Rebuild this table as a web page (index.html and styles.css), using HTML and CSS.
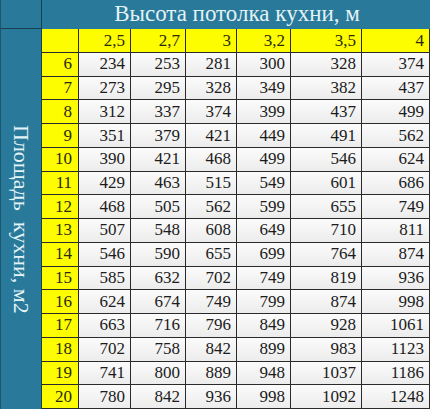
FILE: index.html
```html
<!DOCTYPE html>
<html>
<head>
<meta charset="utf-8">
<link rel="stylesheet" href="styles.css">
</head>
<body>
<div class="sheet">
  <div class="corner"></div>
  <div class="title">Высота потолка кухни, м</div>
  <div class="side"><span class="side-text">Площадь&nbsp; кухни, м2</span></div>

  <div class="hd"></div><div class="hd">2,5</div><div class="hd">2,7</div><div class="hd">3</div><div class="hd">3,2</div><div class="hd">3,5</div><div class="hd">4</div>

  <div class="rh">6</div><div class="c">234</div><div class="c">253</div><div class="c">281</div><div class="c">300</div><div class="c">328</div><div class="c">374</div>
  <div class="rh">7</div><div class="c">273</div><div class="c">295</div><div class="c">328</div><div class="c">349</div><div class="c">382</div><div class="c">437</div>
  <div class="rh">8</div><div class="c">312</div><div class="c">337</div><div class="c">374</div><div class="c">399</div><div class="c">437</div><div class="c">499</div>
  <div class="rh">9</div><div class="c">351</div><div class="c">379</div><div class="c">421</div><div class="c">449</div><div class="c">491</div><div class="c">562</div>
  <div class="rh">10</div><div class="c">390</div><div class="c">421</div><div class="c">468</div><div class="c">499</div><div class="c">546</div><div class="c">624</div>
  <div class="rh">11</div><div class="c">429</div><div class="c">463</div><div class="c">515</div><div class="c">549</div><div class="c">601</div><div class="c">686</div>
  <div class="rh">12</div><div class="c">468</div><div class="c">505</div><div class="c">562</div><div class="c">599</div><div class="c">655</div><div class="c">749</div>
  <div class="rh">13</div><div class="c">507</div><div class="c">548</div><div class="c">608</div><div class="c">649</div><div class="c">710</div><div class="c">811</div>
  <div class="rh">14</div><div class="c">546</div><div class="c">590</div><div class="c">655</div><div class="c">699</div><div class="c">764</div><div class="c">874</div>
  <div class="rh">15</div><div class="c">585</div><div class="c">632</div><div class="c">702</div><div class="c">749</div><div class="c">819</div><div class="c">936</div>
  <div class="rh">16</div><div class="c">624</div><div class="c">674</div><div class="c">749</div><div class="c">799</div><div class="c">874</div><div class="c">998</div>
  <div class="rh">17</div><div class="c">663</div><div class="c">716</div><div class="c">796</div><div class="c">849</div><div class="c">928</div><div class="c">1061</div>
  <div class="rh">18</div><div class="c">702</div><div class="c">758</div><div class="c">842</div><div class="c">899</div><div class="c">983</div><div class="c">1123</div>
  <div class="rh">19</div><div class="c">741</div><div class="c">800</div><div class="c">889</div><div class="c">948</div><div class="c">1037</div><div class="c">1186</div>
  <div class="rh">20</div><div class="c">780</div><div class="c">842</div><div class="c">936</div><div class="c">998</div><div class="c">1092</div><div class="c">1248</div>
</div>
</body>
</html>
```

FILE: styles.css
```css
body {
  margin: 0;
  padding: 0;
  background: #ffffff;
  font-family: "Liberation Serif", "Times New Roman", serif;
}

.sheet {
  width: 430px;
  height: 409px;
  display: grid;
  grid-template-columns: 42px 37px 52px 55px 51px 54px 71px 68px;
  grid-template-rows: 29px 24px repeat(15, 1fr);
  font-family: "Liberation Serif", "Times New Roman", serif;
  color: #1c1c1c;
}

.corner {
  grid-column: 1;
  grid-row: 1;
  box-sizing: border-box;
  background: #29799a;
  border-left: 1px solid #1b5870;
  border-right: 1px solid #173f50;
  border-bottom: 1px solid #173f50;
}

.title {
  grid-column: 2 / span 7;
  grid-row: 1;
  box-sizing: border-box;
  background: #29799a;
  color: #e3f3f6;
  font-family: "Liberation Serif", "Times New Roman", serif;
  font-size: 23px;
  text-align: center;
  line-height: 28px;
  padding-left: 2px;
  white-space: nowrap;
}

.side {
  grid-column: 1;
  grid-row: 2 / span 16;
  box-sizing: border-box;
  background: #29799a;
  border-left: 1px solid #1b5870;
  border-right: 1px solid #173f50;
  display: flex;
  align-items: center;
  justify-content: center;
}

.side-text {
  writing-mode: vertical-rl;
  color: #e3f3f6;
  font-family: "Liberation Serif", "Times New Roman", serif;
  font-size: 22px;
  white-space: nowrap;
}

.hd,
.rh,
.c {
  box-sizing: border-box;
  display: flex;
  align-items: center;
  justify-content: flex-end;
  padding-right: 5px;
  font-family: "Liberation Serif", "Times New Roman", serif;
  font-size: 17px;
  border-right: 1px solid #2a2a2a;
  border-bottom: 1px solid #2a2a2a;
  white-space: nowrap;
}

.hd,
.rh {
  background: #fdfd00;
  color: #2a2a10;
}

.rh {
  padding-right: 6px;
}

.c {
  background: linear-gradient(#fbfbfb, #ececec);
}
```
